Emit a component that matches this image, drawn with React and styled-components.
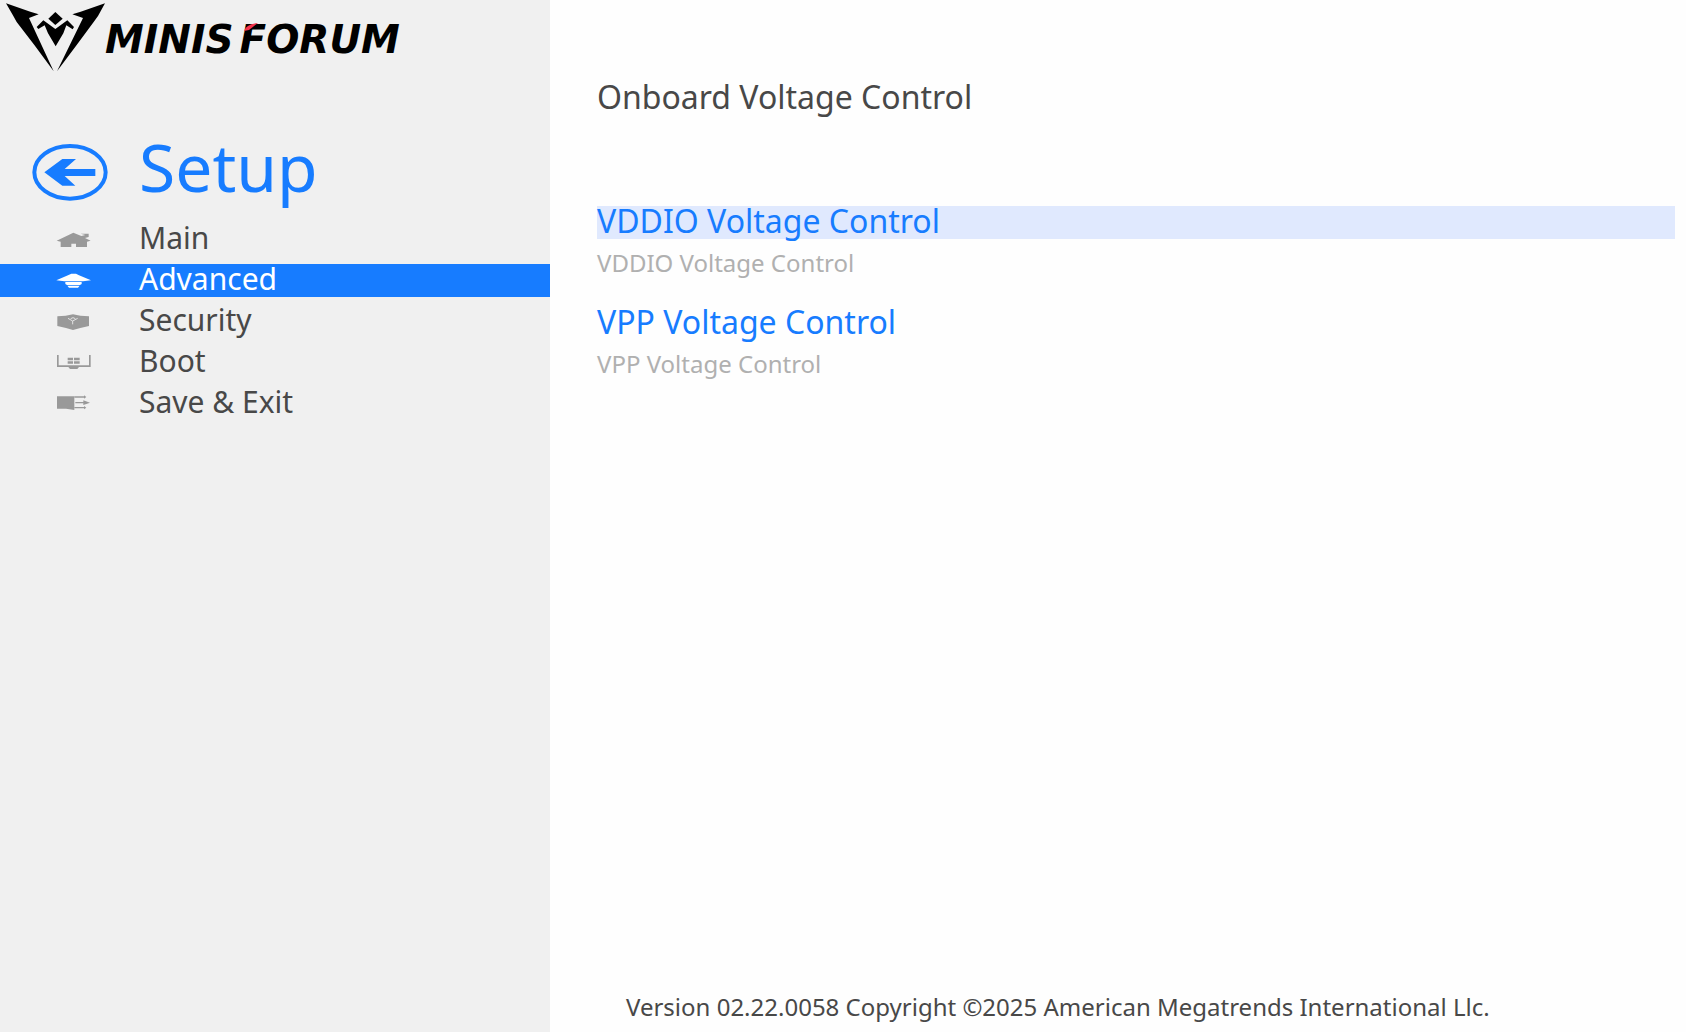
import React, { useState } from "react";
import styled, { createGlobalStyle } from "styled-components";

const color = {
  accent: "#177cff",
  text: "#484848",
  muted: "#b0b0b0",
  icon: "#999999",
  sidebar: "#f0f0f0",
  highlight: "#e0e9fe",
};

const GlobalStyle = createGlobalStyle`
  *, *::before, *::after { box-sizing: border-box; }
  body {
    margin: 0;
    background: #fefefe;
    color: ${color.text};
    font-family: "Noto Sans", "Open Sans", sans-serif;
  }
  h1, h2, p, ul { margin: 0; padding: 0; font-weight: 400; }
  ul { list-style: none; }
`;

const Page = styled.div`
  display: flex;
  min-height: 100vh;
`;

const Sidebar = styled.aside`
  flex: 0 0 550px;
  background: ${color.sidebar};
`;

const Brand = styled.div`
  display: flex;
  align-items: flex-start;
  height: 144px;
  padding: 3px 6px;
`;

const BrandMark = styled.svg`
  width: 99px;
  height: 69px;
  flex: none;
`;

const BrandName = styled.div`
  display: flex;
  gap: 6px;
  padding-top: 19px;
  color: #000;
  font: italic 700 39px/36px "DejaVu Sans", sans-serif;
`;

const BrandPart = styled.span`
  position: relative;
`;

const BrandAccent = styled.svg`
  position: absolute;
  left: 4px;
  top: 1px;
  width: 14px;
  height: 8px;
`;

const SetupHeader = styled.header`
  display: flex;
  align-items: flex-start;
  gap: 31px;
  padding: 0 32px 22px;
`;

const BackButton = styled.button`
  display: block;
  padding: 0;
  border: 0;
  background: none;
  color: ${color.accent};
  cursor: pointer;
`;

const BackIcon = styled.svg`
  display: block;
  width: 76px;
  height: 57px;
`;

const SetupTitle = styled.h1`
  color: ${color.accent};
  font-size: 66px;
  line-height: 44px;
`;

const NavList = styled.ul`
  display: flex;
  flex-direction: column;
  gap: 8px;
`;

const NavLink = styled.a`
  display: flex;
  gap: 48px;
  height: 33px;
  padding-left: 56px;
  background: ${(p) => (p.$active ? color.accent : "transparent")};
  color: ${(p) => (p.$active ? "#ffffff" : color.text)};
  font-size: 30px;
  line-height: 30px;
  text-decoration: none;
`;

const NavIcon = styled.svg`
  width: 35px;
  height: 33px;
  flex: none;
  color: ${(p) => (p.$active ? "#ffffff" : color.icon)};
`;

const Main = styled.main`
  display: flex;
  flex: 1;
  flex-direction: column;
  min-width: 0;
  padding: 82px 11px 12px 47px;
`;

const PageTitle = styled.h2`
  font-size: 32px;
  line-height: 30px;
  padding: 0 0 3px;
`;

const Options = styled.ul`
  display: flex;
  flex: 1;
  flex-direction: column;
  gap: 31px;
  padding-top: 91px;
`;

const OptionButton = styled.button`
  display: block;
  width: 100%;
  height: 33px;
  padding: 0 0 3px;
  border: 0;
  background: ${(p) => (p.$active ? color.highlight : "transparent")};
  color: ${color.accent};
  font: inherit;
  font-size: 32px;
  line-height: 30px;
  text-align: left;
  cursor: pointer;
`;

const OptionHelp = styled.p`
  padding-top: 11px;
  color: ${color.muted};
  font-size: 24px;
  line-height: 26px;
`;

const Footer = styled.footer`
  padding-left: 29px;
  font-size: 24px;
  line-height: 26px;
`;

const icons = {
  main: {
    viewBox: "48 9 105 99",
    art: (
      <path d="M50 62 L100 38 L124 48 L136 45 L122 41 L146 41 L146 51 L135 54 L152 62 L141 65 L141 81 L108 81 L108 71 L94 71 L94 81 L62 81 L62 65 Z" />
    ),
  },
  advanced: {
    viewBox: "48 132 105 99",
    art: (
      <>
        <path d="M49 181 L84 166 L94 161 H108 L117 166 L153 181 L129 184 H73 Z" />
        <path d="M76 186 H125 V192 L120 195 H81 L76 192 Z" />
        <path d="M82 197 H119 L114 203 H87 Z" />
      </>
    ),
  },
  security: {
    viewBox: "48 255 105 99",
    art: (
      <>
        <path d="M52 289 Q78 289 99 283 Q120 289 147 289 V318 L121 324 L99 330 L78 324 L52 318 Z" />
        <path
          d="M84 295 L98 303 L113 295 M98 303 V313 M92 296 L99 293 L106 296"
          fill="none"
          stroke="#e2e2e2"
          strokeWidth="3"
        />
      </>
    ),
  },
  boot: {
    viewBox: "48 378 105 99",
    art: (
      <>
        <path d="M51 405 H56 V436 H147 V405 H152 V441 H117 L112 447 H90 L85 441 H51 Z" />
        <path d="M83 413 H99 V421 H83 Z M102 413 H119 V421 H102 Z M83 424 H99 V431 H83 Z M102 424 H119 V431 H102 Z" />
      </>
    ),
  },
  exit: {
    viewBox: "48 501 105 99",
    art: (
      <>
        <path d="M51 529 H103 V570 L78 566 H51 Z" />
        <path d="M103 529 H132 V526 L139 531 L132 536 V533 H103 Z M106 546 H130 V541 L150 548 L130 555 V550 H106 Z M103 561 H132 V558 L139 563 L132 568 V565 H103 Z" />
      </>
    ),
  },
};

const navItems = [
  { id: "main", label: "Main" },
  { id: "advanced", label: "Advanced" },
  { id: "security", label: "Security" },
  { id: "boot", label: "Boot" },
  { id: "exit", label: "Save & Exit" },
];

const options = ["VDDIO Voltage Control", "VPP Voltage Control"];

function Logo() {
  return (
    <Brand>
      <BrandMark viewBox="18 9 297 207" aria-hidden="true">
        <path d="M18 10 L91 35 L116 43 L87 54 L161 214 L103 135 L50 66 L40 48 Z" />
        <path d="M315 10 L242 35 L217 43 L249 54 L171 214 L230 135 L281 66 L294 48 Z" />
        <path d="M166 36 L188 56 L166 75 L145 56 Z" />
        <path d="M110 81 L130 61 L166 87 L202 61 L222 81 L218 88 L199 76 L190 100 L167 139 L144 100 L134 76 L115 87 Z" />
      </BrandMark>
      <BrandName>
        <BrandPart>MINIS</BrandPart>
        <BrandPart>
          FORUM
          <BrandAccent viewBox="0 0 14 8" aria-hidden="true">
            <path d="M0 8 Q2 1 14 0 L5 7 Z" fill="#f5334b" />
          </BrandAccent>
        </BrandPart>
      </BrandName>
    </Brand>
  );
}

export default function App() {
  const [page, setPage] = useState("advanced");
  const [option, setOption] = useState(options[0]);

  return (
    <Page>
      <GlobalStyle />
      <Sidebar>
        <Logo />
        <SetupHeader>
          <BackButton type="button" aria-label="Back">
            <BackIcon viewBox="96 42 228 171" aria-hidden="true">
              <ellipse
                cx="210"
                cy="127"
                rx="107"
                ry="79"
                fill="none"
                stroke="currentColor"
                strokeWidth="12"
              />
              <path
                d="M133 127 L187 87 H228 L194 117 H286 V138 H194 L226 167 H187 Z"
                fill="currentColor"
              />
            </BackIcon>
          </BackButton>
          <SetupTitle>Setup</SetupTitle>
        </SetupHeader>
        <nav aria-label="Setup">
          <NavList>
            {navItems.map(({ id, label }) => (
              <li key={id}>
                <NavLink
                  href={`#${id}`}
                  $active={page === id}
                  aria-current={page === id ? "page" : undefined}
                  onClick={() => setPage(id)}
                >
                  <NavIcon
                    $active={page === id}
                    viewBox={icons[id].viewBox}
                    fill="currentColor"
                    aria-hidden="true"
                  >
                    {icons[id].art}
                  </NavIcon>
                  {label}
                </NavLink>
              </li>
            ))}
          </NavList>
        </nav>
      </Sidebar>
      <Main>
        <PageTitle>Onboard Voltage Control</PageTitle>
        <Options>
          {options.map((name) => (
            <li key={name}>
              <OptionButton
                type="button"
                $active={option === name}
                onClick={() => setOption(name)}
              >
                {name}
              </OptionButton>
              <OptionHelp>{name}</OptionHelp>
            </li>
          ))}
        </Options>
        <Footer>
          Version 02.22.0058 Copyright ©2025 American Megatrends International
          Llc.
        </Footer>
      </Main>
    </Page>
  );
}
